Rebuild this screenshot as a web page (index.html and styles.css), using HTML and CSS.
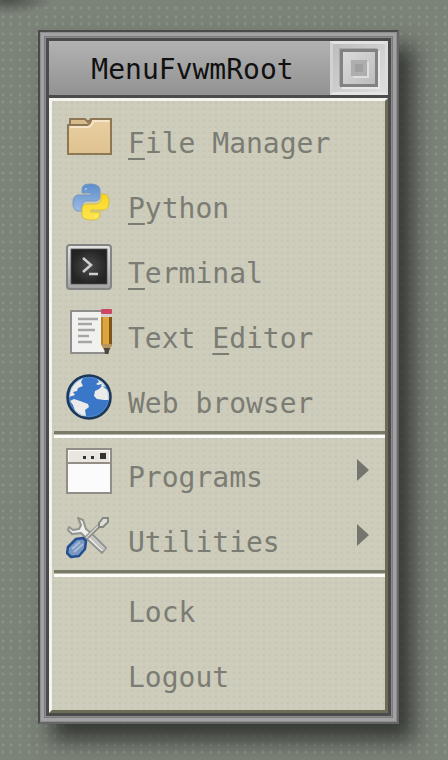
FILE: index.html
```html
<!DOCTYPE html>
<html lang="en">
<head>
<meta charset="utf-8">
<meta name="viewport" content="width=device-width, initial-scale=1">
<title>MenuFvwmRoot</title>
<link rel="stylesheet" href="styles.css">
</head>
<body>
<main class="window">
  <div class="window-inner">
    <header class="titlebar">
      <h1 class="title">MenuFvwmRoot</h1>
      <button class="title-button" type="button" aria-label="Close"><span class="ring"><span class="core"></span></span></button>
    </header>
    <nav class="menu">
      <div class="group">
        <button class="item" type="button">
          <svg class="icon" viewBox="0 0 46 46" aria-hidden="true">
            <defs><linearGradient id="fold" x2="0" y2="1"><stop stop-color="#e9cfa1"/><stop offset="1" stop-color="#dfc290"/></linearGradient></defs>
            <path d="M4 11V5H19L22 8L25 5H45V12H4Z" fill="#d8bb8a" stroke="#8e7754" stroke-width="2"/>
            <path d="M2 11H21Q24 11 26 5H45V40H2Z" fill="url(#fold)" stroke="#8e7754" stroke-width="2"/>
            <path d="M4 13H22Q26 12 27 7H43" fill="none" stroke="#f5e5c8" stroke-width="2"/>
          </svg>
          <span class="label"><u>F</u>ile Manager</span>
        </button>
        <button class="item" type="button">
          <svg class="icon" viewBox="0 0 46 46" aria-hidden="true">
            <defs>
              <linearGradient id="pyb" x2="0" y2="1"><stop stop-color="#5b8dcb"/><stop offset="1" stop-color="#9dbbe4"/></linearGradient>
              <linearGradient id="pyy" x2="0" y2="1"><stop stop-color="#f8d51f"/><stop offset="1" stop-color="#ffe650"/></linearGradient>
            </defs>
            <path d="M24 5C17 5 16 8 16 11V14H25V16H13C8 16 7 20 7 24C7 29 9 32 12 32H16V28C16 24 18 22 22 22H29C32 22 34 20 34 17V11C34 7 30 5 24 5Z" fill="url(#pyb)" stroke="#7797bd" stroke-width="1"/>
            <path d="M26 41C33 41 34 38 34 35V33H25V31H37C41 31 43 28 43 23C43 18 41 15 38 15H35V19C35 23 32 25 29 25H22C18 25 16 27 16 30V36C16 39 20 41 26 41Z" fill="url(#pyy)" stroke="#d2bc44" stroke-width="1"/>
            <circle cx="20" cy="10" r="1" fill="#b7cee9"/><circle cx="30" cy="37" r="1" fill="#fff3a0"/>
          </svg>
          <span class="label"><u>P</u>ython</span>
        </button>
        <button class="item" type="button">
          <svg class="icon" viewBox="0 0 46 46" aria-hidden="true">
            <defs>
              <linearGradient id="tf" x2="0" y2="1"><stop stop-color="#e4e4e2"/><stop offset="1" stop-color="#a3a3a3"/></linearGradient>
              <radialGradient id="ts"><stop stop-color="#4b4b4b"/><stop offset="1" stop-color="#242424"/></radialGradient>
            </defs>
            <rect x="1" y="1" width="44" height="44" rx="3" fill="url(#tf)" stroke="#858585" stroke-width="2"/>
            <rect x="5" y="5" width="36" height="35" fill="url(#ts)" stroke="#6a6a6a" stroke-width="1"/>
            <rect x="6" y="6" width="34" height="33" fill="none" stroke="#222" stroke-width="1"/>
            <path d="M17 14L25 21L17 28M23 30H32" fill="none" stroke="#cfcfcf" stroke-width="2.5"/>
          </svg>
          <span class="label"><u>T</u>erminal</span>
        </button>
        <button class="item" type="button">
          <svg class="icon" viewBox="0 0 46 46" aria-hidden="true">
            <rect x="5" y="2" width="37" height="42" fill="#f1f1f0" stroke="#8e8e8c" stroke-width="2"/>
            <path d="M12 10H32M12 15H26M12 21H29M12 27H23M12 33H26" stroke="#a6a6a4" stroke-width="2.5"/>
            <path d="M35 8H46V36L41 45L35 36Z" fill="#dda541"/>
            <path d="M43 8H46V36L43 39Z" fill="#7f5613"/>
            <path d="M36 8V36" stroke="#b87f25" stroke-width="2"/>
            <path d="M35 35H46L44 41H38Z" fill="#b89560"/>
            <path d="M38 39H44L42 45H39Z" fill="#4c4740"/>
            <rect x="35" y="0" width="11" height="5" rx="1" fill="#cf4564"/>
            <rect x="35" y="5" width="11" height="3" fill="#d4d2cf"/>
          </svg>
          <span class="label">Text <u>E</u>ditor</span>
        </button>
        <button class="item" type="button">
          <svg class="icon" viewBox="0 0 46 46" aria-hidden="true">
            <circle cx="23" cy="23" r="21.5" fill="#3b77c8"/>
            <path d="M5 14Q10 6 17 4L15 8L17 12L12 14L11 17L7 18L9 21L3 23Z" fill="#ebecea"/>
            <path d="M4 27L8 25L14 27L22 30L23 33L19 36L20 42L14 42L9 37L7 31Z" fill="#ebecea"/>
            <path d="M31 5L37 8L40 13L35 12L36 10L32 11L30 10L33 8ZM33 15L36 12L43 17L44 26L38 26L31 25L28 22L29 17Z" fill="#ebecea"/>
            <circle cx="23" cy="23" r="21.5" fill="none" stroke="#1d3856" stroke-width="2.5"/>
            <circle cx="23" cy="23" r="19.5" fill="none" stroke="#6c96cc" stroke-width="1" opacity=".5"/>
          </svg>
          <span class="label">Web browser</span>
        </button>
      </div>
      <hr class="separator">
      <div class="group">
        <button class="item" type="button" aria-haspopup="menu">
          <svg class="icon" viewBox="0 0 46 46" aria-hidden="true">
            <rect x="1" y="1" width="44" height="44" fill="#fbfbfb" stroke="#928e87" stroke-width="2"/>
            <rect x="3" y="3" width="40" height="11" fill="#e9e5df"/>
            <path d="M1 15H45" stroke="#928e87" stroke-width="2"/>
            <path d="M17 8H20V11H17ZM25 8H28V11H25ZM34 5H40V11H34Z" fill="#333"/>
          </svg>
          <span class="label">Programs</span>
          <svg class="arrow" viewBox="0 0 12 22" aria-hidden="true"><path d="M0 0L12 11L0 22Z"/></svg>
        </button>
        <button class="item" type="button" aria-haspopup="menu">
          <svg class="icon" viewBox="0 0 46 46" aria-hidden="true">
            <path d="M12 5L17 7L20 16L25 20L40 35L36 40L20 25L15 20L6 21L2 17L3 14L7 17L13 16L15 12Z" fill="#eeeeec" stroke="#92948f" stroke-width="2" stroke-linejoin="round"/>
            <path d="M23 22L38 37" stroke="#c2c3c0" stroke-width="3"/>
            <path d="M17 28L35 11" stroke="#8a8c86" stroke-width="4"/>
            <path d="M20 25L34 11" stroke="#d7d8d3" stroke-width="1.5"/>
            <path d="M33 10L37 5H42V9L37 14H33Z" fill="#dededb" stroke="#858781" stroke-width="2"/>
            <path d="M10 26L17 25L20 28L19 36L13 43L5 44L1 40L2 34Z" fill="#7898c2" stroke="#244f91" stroke-width="2.5" stroke-linejoin="round"/>
            <path d="M6 36L14 29M8 39L17 31" stroke="#a9bdd8" stroke-width="2"/>
          </svg>
          <span class="label">Utilities</span>
          <svg class="arrow" viewBox="0 0 12 22" aria-hidden="true"><path d="M0 0L12 11L0 22Z"/></svg>
        </button>
      </div>
      <hr class="separator">
      <div class="group plain">
        <button class="item" type="button"><span class="label">Lock</span></button>
        <button class="item" type="button"><span class="label">Logout</span></button>
      </div>
    </nav>
  </div>
</main>
</body>
</html>
```
FILE: styles.css
```css
* { box-sizing: border-box; }

:root {
  --dot: #8a9286 0, #8a9286 1px, transparent 2px;
  --ink: #7b7c73;
}

/* 26px tile carrying a three by three grid of dots */
body {
  margin: 0;
  min-height: 100vh;
  padding: 30px 49px 36px 38px;
  background-color: #7b8277;
  background-image:
    radial-gradient(ellipse 44px 14px at 8px 0, #4d514b 0, transparent 100%),
    radial-gradient(circle at 3px 8px, var(--dot)),
    radial-gradient(circle at 11px 8px, var(--dot)),
    radial-gradient(circle at 20px 8px, var(--dot)),
    radial-gradient(circle at 3px 17px, var(--dot)),
    radial-gradient(circle at 11px 17px, var(--dot)),
    radial-gradient(circle at 20px 17px, var(--dot)),
    radial-gradient(circle at 3px 24px, var(--dot)),
    radial-gradient(circle at 11px 24px, var(--dot)),
    radial-gradient(circle at 20px 24px, var(--dot));
  background-size: 100% 100%, 26px 26px, 26px 26px, 26px 26px, 26px 26px, 26px 26px, 26px 26px, 26px 26px, 26px 26px, 26px 26px;
  font-family: "DejaVu Sans Mono", "Liberation Mono", monospace;
  font-size: 28px;
  line-height: 32px;
}

.window {
  border: 2px solid #4a4a4a;
  border-right-color: #666;
  border-bottom-color: #666;
  padding: 6px;
  background: #8b8b8b;
  box-shadow:
    inset 0 0 0 1px #8d8d8d,
    inset 0 0 0 4px #a2a2a2,
    inset 0 0 0 5px #7c7c7c,
    14px 16px 20px rgba(45, 48, 44, .9);
}

.window-inner {
  border: 3px solid #4b4b4b;
  background: #4b4b4b;
}

.titlebar {
  display: flex;
  height: 54px;
  background: linear-gradient(#b2b2b2, #929292);
}

.title {
  flex: 1;
  margin: 0;
  padding: 13px 0 0 6px;
  text-align: center;
  font-size: 28px;
  line-height: 32px;
  font-weight: 400;
  color: #111;
}

.title-button {
  display: grid;
  place-items: center;
  width: 58px;
  padding: 0;
  border: 3px solid;
  border-color: #e2e2e2 #dcdcdc #e4e4e4 #d2d2d2;
  background: linear-gradient(135deg, #bdbdbd, #dedede);
}

.ring {
  display: grid;
  place-items: center;
  width: 38px;
  height: 38px;
  border: 3px solid #828282;
  background: linear-gradient(135deg, #dadada, #bcbcbc);
  box-shadow: 2px 2px 0 #e8e8e8, -1px -1px 0 #a9a9a9;
}

.core {
  width: 16px;
  height: 16px;
  border: 4px solid #aeaeae;
  background: #a0a0a0;
  box-shadow: 2px 2px 0 #dedede;
}

.menu {
  margin-top: 3px;
  padding: 4px 0 2px;
  border: 3px solid;
  border-color: #f4f4ee #6d6b58 #6b6c55 #f4f4ee;
  background-color: #cecdbc;
  background-image: radial-gradient(circle at 2px 2px, #c8c7b7 1px, transparent 2px);
  background-size: 6px 6px;
}

.item {
  display: flex;
  gap: 16px;
  width: 100%;
  height: 65px;
  padding: 9px 16px 0 14px;
  border: 0;
  background: none;
  color: var(--ink);
  font: inherit;
  text-align: left;
}

.icon {
  flex: none;
  width: 46px;
  height: 46px;
}

.label {
  flex: 1;
  padding-top: 14px;
  white-space: nowrap;
}

.label u {
  text-decoration-thickness: 2px;
  text-underline-offset: 5px;
}

.plain .item {
  padding-top: 5px;
  padding-left: 76px;
}

.arrow {
  flex: none;
  width: 12px;
  height: 22px;
  margin-top: 11px;
  fill: #74756d;
}

.separator {
  height: 7px;
  margin: 1px 0 1px 2px;
  border: 0;
  border-top: 3px solid #7a7a68;
  border-bottom: 3px solid #fbfbf7;
  background: #b9b8a8;
}
```
